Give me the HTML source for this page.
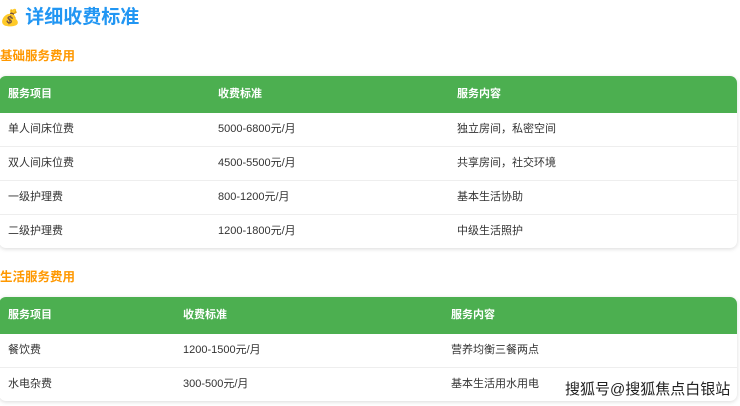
<html><head><style>
body{margin:0;width:740px;height:406px;overflow:hidden;background:#fff;font-family:"Liberation Sans","Noto Sans CJK SC",sans-serif;position:relative}
.t{position:absolute;left:0;top:6px;font-size:19px;font-weight:bold;color:#2196f3;line-height:24px}
.t i{font-style:normal;font-size:16px}
.h{position:absolute;left:0;font-size:12.5px;font-weight:bold;color:#ff9800}
.tb{position:absolute;left:-1px;width:738px;border-radius:7px;overflow:hidden;box-shadow:0 1px 4px rgba(0,0,0,.15);background:#fff}
.r{position:relative;height:33px;border-bottom:1px solid #eee;font-size:11px;color:#333}
.r span{position:absolute;top:0;line-height:33px}
.hd{background:#4caf50;color:#fff;font-weight:bold;height:37px;border:none}
.hd span{line-height:37px}
.wm{position:absolute;left:565px;top:378px;font-size:15px;color:#222;text-shadow:0 0 2px #fff,0 0 2px #fff}
</style></head><body>
<div class="t"><i>💰</i> 详细收费标准</div>
<div class="h" style="top:45px">基础服务费用</div>
<div class="tb" style="top:76px">
<div class="r hd"><span style="left:9px">服务项目</span><span style="left:219px">收费标准</span><span style="left:458px">服务内容</span></div>
<div class="r"><span style="left:9px">单人间床位费</span><span style="left:219px">5000-6800元/月</span><span style="left:458px">独立房间，私密空间</span></div>
<div class="r"><span style="left:9px">双人间床位费</span><span style="left:219px">4500-5500元/月</span><span style="left:458px">共享房间，社交环境</span></div>
<div class="r"><span style="left:9px">一级护理费</span><span style="left:219px">800-1200元/月</span><span style="left:458px">基本生活协助</span></div>
<div class="r" style="border:none"><span style="left:9px">二级护理费</span><span style="left:219px">1200-1800元/月</span><span style="left:458px">中级生活照护</span></div>
</div>
<div class="h" style="top:266px">生活服务费用</div>
<div class="tb" style="top:297px">
<div class="r hd"><span style="left:9px">服务项目</span><span style="left:184px">收费标准</span><span style="left:452px">服务内容</span></div>
<div class="r"><span style="left:9px">餐饮费</span><span style="left:184px">1200-1500元/月</span><span style="left:452px">营养均衡三餐两点</span></div>
<div class="r" style="border:none"><span style="left:9px">水电杂费</span><span style="left:184px">300-500元/月</span><span style="left:452px">基本生活用水用电</span></div>
</div>
<div class="wm">搜狐号@搜狐焦点白银站</div>
</body></html>
